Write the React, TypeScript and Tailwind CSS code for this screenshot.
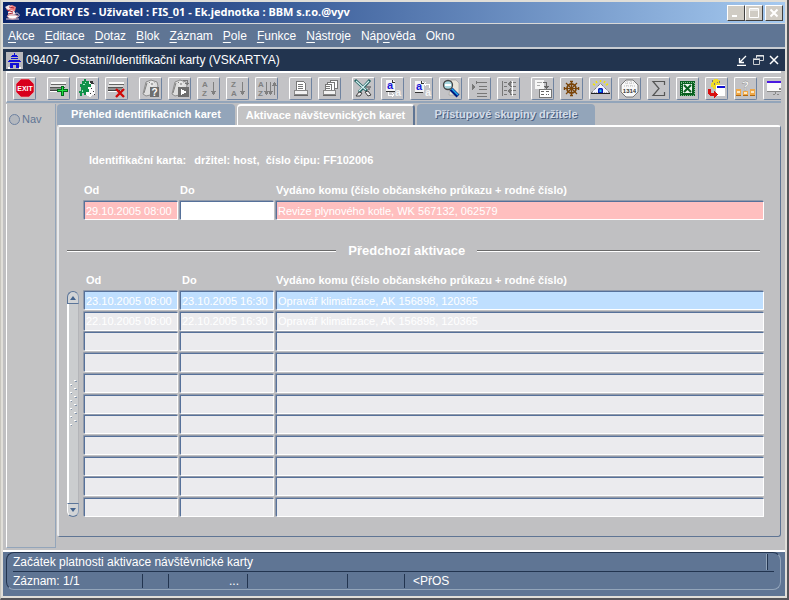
import { useState } from "react";
import type { ReactNode } from "react";

const menus = [
  { before: "", key: "A", after: "kce" },
  { before: "", key: "E", after: "ditace" },
  { before: "", key: "D", after: "otaz" },
  { before: "", key: "B", after: "lok" },
  { before: "", key: "Z", after: "áznam" },
  { before: "", key: "P", after: "ole" },
  { before: "", key: "F", after: "unkce" },
  { before: "", key: "N", after: "ástroje" },
  { before: "Náp", key: "o", after: "věda" },
  { before: "Okno", key: "", after: "" },
];

const tabs = [
  "Přehled identifikačních karet",
  "Aktivace návštevnických karet",
  "Přístupové skupiny držitele",
];

const history = [
  { od: "23.10.2005 08:00", doo: "23.10.2005 16:30", komu: "Opravář klimatizace, AK 156898, 120365" },
  { od: "22.10.2005 08:00", doo: "22.10.2005 16:30", komu: "Opravář klimatizace, AK 156898, 120365" },
  ...Array.from({ length: 9 }, () => ({ od: "", doo: "", komu: "" })),
];

const fieldBase =
  "block h-[19px] w-full rounded-[1px] border border-t-[#56719a] border-l-[#56719a] border-r-white border-b-white px-px text-[11px] leading-none text-white shadow-[-1px_-1px_0_#929bab] outline-none";

function Icon({ children }: { children: ReactNode }) {
  return (
    <svg width="21" height="21" viewBox="0 0 21 21" shapeRendering="crispEdges" aria-hidden="true">
      {children}
    </svg>
  );
}

function Sheet() {
  return (
    <>
      <path d="M3 4h15v2H3z" fill="#f8f8f8" />
      <path d="M3 6h15v1H3z" fill="#666" />
      <path d="M2 7h15v2H2z" fill="#dcdcdc" />
      <path d="M2 9h15v1H2z" fill="#555" />
      <path d="M2 10h14v2H2z" fill="#8e8e8e" />
      <path d="M2 12h12v1H2z" fill="#444" />
      <path d="M2 13h10v1H2z" fill="#fff" />
    </>
  );
}

function GrayCards() {
  return (
    <g shapeRendering="auto">
      <path d="M6 4l5-2 6 2 1 4-4 8-8 2-3-2z" fill="#dedede" stroke="#8c8c8c" />
      <path d="M7 5L4 15M9 4l3 3M14 4l-1 4" stroke="#808080" fill="none" />
      <circle cx="12" cy="6" r="2" fill="#aaa" stroke="#fff" />
    </g>
  );
}

function Letters({ top, bottom }: { top: string; bottom: string }) {
  return (
    <g fontFamily="Liberation Sans, sans-serif" fontSize="8" fontWeight="bold" fill="#808080">
      <text x="4" y="9">{top}</text>
      <text x="4" y="18">{bottom}</text>
    </g>
  );
}

const toolGroups: { name: string; icon: ReactNode }[][] = [
  [
    {
      name: "Konec",
      icon: (
        <g shapeRendering="auto">
          <path d="M7 1h8l5 5v8l-5 5H7l-5-5V6z" fill="#d8001c" stroke="#f0b0b0" strokeWidth="0.6" />
          <text x="11" y="12.500" textAnchor="middle" fontSize="7" fontWeight="bold" fontFamily="Liberation Sans, sans-serif" fill="#fff">
            EXIT
          </text>
        </g>
      ),
    },
  ],
  [
    {
      name: "Nový záznam",
      icon: (
        <>
          <Sheet />
          <path d="M13 8h3v3h4v3h-4v4h-3v-4H9v-3h4z" fill="#006b1c" />
          <path d="M14 9h1v3h4v1h-4v4h-1v-4h-4v-1h4z" fill="#20e040" />
        </>
      ),
    },
    {
      name: "Duplikovat",
      icon: (
        <>
          <path d="M8 3l6 1 4 4v8l-5 3-6-3z" fill="#fafafa" />
          <path d="M5 3h2V1h2v2h3v3h2v3h-3v2h1v3H9v3H7v-2H5v3H3v-3H2v-2h2V9H3V6h2z" fill="#109048" />
          <path d="M13 3h3v2h1v1h-3zM14 10h1v1h-1zM16 13h1v1h-1zM13 15h1v1h-1zM17 16h1v1h-1z" fill="#333" />
          <path d="M6 6h2v1H6zM5 12h1v2H5zM8 4h1v1H8z" fill="#9ff0c0" />
        </>
      ),
    },
    {
      name: "Smazat záznam",
      icon: (
        <>
          <Sheet />
          <path d="M10 11l8 8M18 11l-8 8" stroke="#d00808" strokeWidth="2.4" shapeRendering="auto" />
        </>
      ),
    },
  ],
  [
    {
      name: "Zadat dotaz",
      icon: (
        <>
          <GrayCards />
          <path d="M10 9h9v10h-9z" fill="#6e6e6e" />
          <text x="14.500" y="17.500" textAnchor="middle" fontSize="10" fontWeight="bold" fontFamily="Liberation Sans, sans-serif" fill="#fff">?</text>
        </>
      ),
    },
    {
      name: "Provést dotaz",
      icon: (
        <>
          <GrayCards />
          <path d="M9 9h11v10H9z" fill="#6e6e6e" />
          <path d="M12 11v6l6-3z" fill="#fff" />
          <path d="M14 2h4v5M16 5h4" stroke="#777" fill="none" />
        </>
      ),
    },
    {
      name: "Třídit vzestupně",
      icon: (
        <>
          <Letters top="A" bottom="Z" />
          <path d="M15 4h1v9h2l-2 4h-1l-2-4h2z" fill="#808080" />
        </>
      ),
    },
    {
      name: "Třídit sestupně",
      icon: (
        <>
          <Letters top="Z" bottom="A" />
          <path d="M15 4h1v9h2l-2 4h-1l-2-4h2z" fill="#808080" />
        </>
      ),
    },
    {
      name: "Třídit podle",
      icon: (
        <>
          <g transform="translate(-2 0)">
            <Letters top="A" bottom="Z" />
          </g>
          <path d="M10 4h1v9h2l-2 4h-1l-2-4h2zM14 4h1v9h2l-2 4h-1l-2-4h2zM18 17h1V8h2l-2-4h-1l-2 4h2z" fill="#808080" />
        </>
      ),
    },
  ],
  [
    {
      name: "Tisk",
      icon: (
        <>
          <path d="M7 3h6l2 2v7H6V6z" fill="#fff" stroke="#777" />
          <path d="M8 6h5v1H8zM8 8h5v1H8zM8 10h5v1H8z" fill="#777" />
          <path d="M4 12h13v4H4z" fill="#f2f2f2" stroke="#888" />
          <path d="M4 17h14v1H4z" fill="#666" />
        </>
      ),
    },
    {
      name: "Tisk seznamu",
      icon: (
        <>
          <path d="M12 2h6v8h-5V4h-2z" fill="#fff" stroke="#777" />
          <path d="M9 4h6v8h-5V6H8z" fill="#fff" stroke="#777" />
          <path d="M6 6h6v7H6z" fill="#fff" stroke="#777" />
          <path d="M7 8h4v1H7zM7 10h4v1H7z" fill="#777" />
          <path d="M4 12h12v4H4z" fill="#f2f2f2" stroke="#888" />
          <path d="M4 17h13v1H4z" fill="#666" />
        </>
      ),
    },
  ],
  [
    {
      name: "Vyjmout",
      icon: (
        <g shapeRendering="auto" fill="none">
          <path d="M2 2l12 11M17 2L6 14" stroke="#1f5f5f" strokeWidth="3" />
          <path d="M3 3l10 9M16 3L6 13" stroke="#d4f0f0" strokeWidth="1.300" />
          <path d="M3 18l3-4 3 1-2 3zM12 14l3-1 3 4-3 1z" stroke="#444" fill="#eee" />
          <path d="M13 9h5M15 11h2" stroke="#444" />
        </g>
      ),
    },
    {
      name: "Kopírovat",
      icon: (
        <>
          <path d="M4 2h7l2 2v9H4z" fill="#f4f4f4" />
          <path d="M10 2h1v2h2v1h-3zM4 13h9v1H4z" fill="#333" />
          <g fontFamily="Liberation Sans, sans-serif" fontSize="11" fontWeight="bold">
            <text x="5" y="11" fill="#1818d8">a</text>
            <text x="13" y="18" fill="#f4f4f4">a</text>
          </g>
          <path d="M6 14v3h5M10 15l2 2-2 2" stroke="#fff" fill="none" />
        </>
      ),
    },
    {
      name: "Vložit",
      icon: (
        <>
          <path d="M4 3h7l2 2v9H4z" fill="#f4f4f4" />
          <path d="M10 3h1v2h2v1h-3zM4 14h8v1H4z" fill="#333" />
          <g fontFamily="Liberation Sans, sans-serif" fontSize="11" fontWeight="bold">
            <text x="5" y="12" fill="#1818d8">a</text>
            <text x="14" y="18" fill="#f4f4f4">a</text>
          </g>
          <path d="M13 6h5v4M15 4l-2 2 2 2" stroke="#fff" fill="none" />
        </>
      ),
    },
    {
      name: "Hledat",
      icon: (
        <g shapeRendering="auto">
          <path d="M11 2h5l3 3v12H9z" fill="#e8e4d8" stroke="#999" strokeWidth="0.6" />
          <path d="M11 11l7 7" stroke="#001a80" strokeWidth="4" />
          <path d="M11 10l7 7" stroke="#20a8e8" strokeWidth="1.600" />
          <circle cx="8" cy="7" r="4.500" fill="#a8d8e0" stroke="#444" strokeWidth="1.300" />
          <path d="M5 7h6" stroke="#fff" strokeWidth="2" />
        </g>
      ),
    },
    {
      name: "Vložit řádek",
      icon: (
        <path d="M8 4h10v1H8zM10 8h8v1h-8zM10 11h8v1h-8zM8 15h10v1H8zM8 18h10v1H8zM3 6l4 3-4 3zM7 3h1v3H7z" fill="#777" />
      ),
    },
    {
      name: "Seznam hodnot",
      icon: (
        <>
          <path d="M4 3h1v15H4zM6 4h3v1H6zM6 8h3v1H6zM6 12h3v1H6zM6 16h3v1H6zM12 4h6v1h-6zM12 8h6v1h-6zM12 12h6v1h-6zM12 16h6v1h-6z" fill="#777" />
          <path d="M13 3l-4 3 4 3zM13 10l-4 3 4 3z" fill="#777" />
          <path d="M14 3h1v15h-1z" fill="#fff" />
        </>
      ),
    },
  ],
  [
    {
      name: "Přenos",
      icon: (
        <>
          <path d="M3 2h9v9H3z" fill="#f6f6f6" />
          <path d="M5 4h5v1H5zM5 7h3v1H5z" fill="#ababab" />
          <path d="M11 4h4v4h2l-2 3h-1l-2-3h2V5h-3z" fill="#666" />
          <path d="M7 11h12v8H7z" fill="#fff" stroke="#777" />
          <path d="M9 13h3v1H9zM9 16h3v1H9zM14 13h3v1h-3zM14 16h1v1h-1zM16 16h1v1h-1z" fill="#666" />
        </>
      ),
    },
    {
      name: "Navigace",
      icon: (
        <g shapeRendering="auto" fill="none" stroke="#7a4408">
          <circle cx="10.500" cy="10.500" r="4.500" strokeWidth="1.800" />
          <path d="M10.500 3v15M3 10.500h15M5 5l11 11M16 5L5 16" strokeWidth="1.200" />
          <path d="M9 3.500h3M9 17.500h3M3.500 9v3M17.500 9v3" strokeWidth="1.500" />
        </g>
      ),
    },
    {
      name: "Detail",
      icon: (
        <g shapeRendering="auto">
          <path d="M10.500 2v2M6 3l1 2M15 3l-1 2M3 6l2 1M18 6l-2 1" stroke="#f4e400" strokeWidth="1.400" />
          <path d="M1 15l9.500-9.500L20 15z" fill="#f4f4ff" stroke="#555" strokeDasharray="1 1" />
          <path d="M8 15v-4l1-1h3l1 1v4z" fill="#0818b8" />
          <path d="M9.500 11.500h2V14h-2z" fill="#18c8f0" />
          <path d="M1 15.500h19" stroke="#222" />
        </g>
      ),
    },
    {
      name: "Kalendář",
      icon: (
        <g shapeRendering="auto">
          <path d="M7 2h7l5 5v7l-5 5H7l-5-5V7z" fill="#f8f8f8" stroke="#777" />
          <path d="M6 5h9M5 8h11M8 3v6M12 3v6" stroke="#bbb" strokeDasharray="1 1" />
          <text x="10.500" y="15" textAnchor="middle" fontSize="6" fontWeight="bold" fontFamily="Liberation Sans, sans-serif" fill="#333">1314</text>
        </g>
      ),
    },
    {
      name: "Součet",
      icon: <path d="M16.500 7V3.500H5l6 7-6 7h11.500V14" fill="none" stroke="#555" strokeWidth="1.200" shapeRendering="auto" />,
    },
    {
      name: "Excel",
      icon: (
        <>
          <path d="M3 3h15v15H3z" fill="#0a6020" />
          <path d="M4 4h13v13H4z" fill="none" stroke="#7fc08c" strokeDasharray="1 1" />
          <path d="M6 6h9v9H6z" fill="#eef6ee" />
          <path d="M7 7l7 7M14 7l-7 7" stroke="#0a6020" strokeWidth="2" shapeRendering="auto" />
        </>
      ),
    },
    {
      name: "Export",
      icon: (
        <>
          <path d="M6 2h2V1h4v1h2v5h-2v2h-2v2H7V9H5V5h1z" fill="#f0dc28" />
          <path d="M6 2h1v2H6zM13 3h1v2h-1zM8 5h1v2H8zM11 4h1v1h-1z" fill="#777" />
          <path d="M10 7h9v11h-9z" fill="#fff" />
          <path d="M11 8h8v2h-8z" fill="#1010d0" />
          <path d="M2 11h3v4h3v-2l4 4-4 3v-2H4l-2-2z" fill="#d81010" />
        </>
      ),
    },
    {
      name: "Nápověda",
      icon: (
        <>
          <path d="M1 11h5v7H1zM8 13h5v5H8zM15 11h5v7h-5z" fill="#f0a848" />
          <path d="M2 13h3v2H2zM9 14h3v2H9zM16 13h3v2h-3z" fill="#fce8c0" />
          <path d="M1 17h5v1H1zM8 17h5v1H8zM15 17h5v1h-5z" fill="#b06810" />
          <text x="10.500" y="12" textAnchor="middle" fontSize="12" fontWeight="bold" fontFamily="Liberation Sans, sans-serif" fill="#fff" stroke="#777" strokeWidth="0.300">?</text>
        </>
      ),
    },
    {
      name: "Prezentace",
      icon: (
        <>
          <path d="M3 4h18v9H3z" fill="#fafafa" />
          <path d="M3 3h18v2H3z" fill="#4818e0" />
          <path d="M3 13h18v1H3zM11 13h1v3h-1zM9 16h2v1H9zM13 16h2v1h-2zM15 10h2v2h-2z" fill="#888" />
        </>
      ),
    },
  ],
];

function ToolButton({ name, icon }: { name: string; icon: ReactNode }) {
  return (
    <button
      type="button"
      aria-label={name}
      className="size-[23px] shrink-0 rounded-[2px] border border-t-white border-l-white border-r-[#6f83a0] border-b-[#6f83a0] bg-[#c3c3c6]"
    >
      <Icon>{icon}</Icon>
    </button>
  );
}

function WindowButton({ label, children }: { label: string; children: ReactNode }) {
  return (
    <button
      type="button"
      aria-label={label}
      className="flex h-4 w-[18px] items-center justify-center border border-t-white border-l-white border-r-[#404040] border-b-[#404040] bg-[#d0ccc4]"
    >
      <svg width="12" height="12" viewBox="0 0 12 12" fill="none" stroke="#fff">
        {children}
      </svg>
    </button>
  );
}

function ScrollBar() {
  return (
    <div className="flex w-3 flex-col">
      <button type="button" aria-label="Nahoru" className="flex h-[13px] items-center justify-center rounded-t-full border border-t-[#5b7599] border-l-[#5b7599] border-r-[#8ea0b8] border-b-[#5b7599] bg-[#d2d4d6]">
        <svg width="6" height="4" viewBox="0 0 6 4" aria-hidden="true"><path d="M3 0l3 4H0z" fill="#44648e" /></svg>
      </button>
      <div className="flex flex-1 items-center justify-center border-r border-l-2 border-r-[#b4b5b9] border-l-white bg-[#cbcdcf]">
        <svg width="8" height="50" viewBox="0 0 8 50" shapeRendering="crispEdges" aria-hidden="true">
          {[0, 8, 16, 24, 32, 40].map((y) => (
            <g key={y}>
              <path d={`M4 ${y + 1}h2v1H4zM0 ${y + 5}h2v1H0z`} fill="#fff" />
              <path d={`M5 ${y + 2}h2v1H5zM1 ${y + 6}h1v1H1z`} fill="#8294ac" />
            </g>
          ))}
        </svg>
      </div>
      <button type="button" aria-label="Dolů" className="flex h-[14px] items-center justify-center rounded-b-full border border-t-[#5b7599] border-l-white border-r-[#8ea0b8] border-b-[#5b7599] bg-[#d2d4d6]">
        <svg width="6" height="4" viewBox="0 0 6 4" aria-hidden="true"><path d="M0 0h6L3 4z" fill="#44648e" /></svg>
      </button>
    </div>
  );
}

function Columns() {
  return (
    <colgroup>
      <col className="w-24" />
      <col className="w-24" />
      <col />
    </colgroup>
  );
}

export default function App() {
  const [activeTab, setActiveTab] = useState(1);

  return (
    <div className="flex min-h-screen w-full flex-col border-r-2 border-b-2 border-l border-r-[#55555a] border-b-[#55555a] border-l-[#c8c6be] font-['Liberation_Sans',Arial,sans-serif] text-white">
      <div className="flex flex-1 flex-col border-2 border-[#e0ded8] bg-[#c0c0c2]">
        <header className="flex h-[21px] items-center gap-1 bg-linear-to-r from-[#0a246a] to-[#a6caf0] pr-[2px] pl-px">
          <svg width="17" height="17" viewBox="0 0 17 17" aria-hidden="true">
            <path d="M2 5l2-3 4-1 4 2-1 4-4 2z" fill="#f08080" />
            <path d="M1 3l4-2 3 2-4 3zM4 8l3-2 3 1 2 3-4 2-4-1z" fill="#f6e8ea" />
            <path d="M5 3l5 1M3 6l6 2M4 10l5-1" stroke="#b02838" />
            <path d="M3 12c2 4 9 4 11 0l-2-1H5z" fill="#fff" stroke="#c88890" />
            <path d="M12 9c4 0 4 4 1 4M2 15h13" stroke="#f4d4d8" fill="none" />
          </svg>
          <h1 className="flex-1 font-['Noto_Sans',Tahoma,sans-serif] text-[11px] font-bold whitespace-nowrap">
            FACTORY ES - Uživatel : FIS_01 - Ek.jednotka : BBM s.r.o.@vyv
          </h1>
          <div className="flex gap-0.5">
            <div className="flex">
              <WindowButton label="Minimalizovat">
                <path d="M2 9h5" strokeWidth="2" />
              </WindowButton>
              <WindowButton label="Maximalizovat">
                <path d="M1.500 1.500h9v9h-9zM1 3h10" />
              </WindowButton>
            </div>
            <WindowButton label="Zavřít">
              <path d="M2.500 2.500l7 7M9.500 2.500l-7 7" strokeWidth="2" />
            </WindowButton>
          </div>
        </header>

        <nav className="flex h-[26px] items-center gap-2.5 border-t border-b-2 border-t-[#d8d8d8] border-b-[#c8ccd2] bg-[#5f7594] pl-[5px]">
          {menus.map((m) => (
            <button key={m.before + m.key + m.after} type="button" className="text-xs">
              {m.before}
              <span className="underline underline-offset-2">{m.key}</span>
              {m.after}
            </button>
          ))}
        </nav>

        <div className="flex h-[22px] items-center gap-[3px] bg-[#22344f] pr-[5px] pl-[3px]">
          <svg width="17" height="19" viewBox="0 0 17 19" shapeRendering="crispEdges" aria-hidden="true">
            <path d="M0 1h17v17H0z" fill="#b8b8bc" />
            <path d="M8 2h1v2h2v1h1v1H5V5h1V4h2zM5 7h7v1H5zM3 9h11v1h1v1H2v-1h1zM4 12h9v5h-3v-3H7v3H4z" fill="#1010d8" />
            <path d="M2 16h2v2H2zM13 16h2v2h-2z" fill="#fff" />
          </svg>
          <h2 className="flex-1 text-xs whitespace-nowrap">09407 - Ostatní/Identifikační karty (VSKARTYA)</h2>
          <div className="flex gap-1">
            <button type="button" aria-label="Sbalit okno">
              <svg width="12" height="12" viewBox="0 0 12 12" fill="none" stroke="#fff">
                <path d="M10 2L4 8M3.500 4v4.500H8M1 11.500h9" strokeWidth="1.300" />
              </svg>
            </button>
            <button type="button" aria-label="Obnovit okno">
              <svg width="12" height="12" viewBox="0 0 12 12" fill="none" stroke="#c8ccd0">
                <path d="M4.500 4V1.500h7v5H8M1.500 5.500h6v5h-6z" />
                <path d="M4 2h8M1 5h7" stroke="#fff" />
              </svg>
            </button>
            <button type="button" aria-label="Zavřít okno">
              <svg width="12" height="12" viewBox="0 0 12 12" fill="none" stroke="#fff">
                <path d="M2 2l8 8M10 2l-8 8" strokeWidth="1.500" />
              </svg>
            </button>
          </div>
        </div>

        <div className="mr-1 ml-[3px] flex gap-[11px] overflow-hidden border-t-2 border-b-2 border-l border-t-white border-b-[#93a5ba] border-l-white bg-[#c3c3c6] pt-1 pb-px pl-1.5">
          {toolGroups.map((group, i) => (
            <div key={i} className="flex shrink-0 gap-1.5">
              {group.map((tool) => (
                <ToolButton key={tool.name} name={tool.name} icon={tool.icon} />
              ))}
            </div>
          ))}
        </div>

        <div className="mt-px flex flex-1 pr-1 pl-[3px]">
          <aside className="w-[50px] border-r border-b border-l border-r-[#93a5ba] border-b-[#93a5ba] border-l-white bg-[#c3c3c4] pt-[7px] pl-0.5">
            <label className="flex items-center gap-0.5 text-[11px] text-[#5f7594]">
              <input type="radio" className="size-[11px] appearance-none rounded-full border border-[#6d81a0] bg-[#b4b8be]" />
              Nav
            </label>
          </aside>

          <main className="flex min-w-0 flex-1 flex-col pb-[11px] pl-px">
            <div role="tablist" className="flex gap-0.5">
              {tabs.map((tab, i) => (
                <button
                  key={tab}
                  type="button"
                  role="tab"
                  aria-selected={activeTab === i}
                  onClick={() => setActiveTab(i)}
                  className={
                    "h-[21px] w-[178px] text-[11px] font-bold whitespace-nowrap " +
                    (activeTab === i
                      ? "rounded-t-[4px] border-t-2 border-r-2 border-l border-t-white border-r-[#5f7594] border-l-white bg-[#c3c3c4]"
                      : i === 2
                        ? "rounded-t-[4px] bg-[#93a5ba] text-[#d5dde8] [text-shadow:1px_1px_0_#4a6080]"
                        : "rounded-t-[4px] bg-[#93a5ba]")
                  }
                >
                  {tab}
                </button>
              ))}
            </div>

            <section
              role="tabpanel"
              className="flex-1 rounded-[3px] border-t-2 border-r border-b border-l-2 border-t-white border-r-[#5f7594] border-b-[#5f7594] border-l-[#e8eaec] pr-4 pl-2"
            >
              <p className="mt-[25px] ml-[22px] flex gap-2 text-[11px] leading-4 font-bold">
                <span>Identifikační karta:</span>
                <span className="whitespace-pre">držitel: host,  číslo čipu: FF102006</span>
              </p>

              <div className="mt-3.5 pl-[17px]">
                <table className="w-full table-fixed border-collapse">
                  <Columns />
                  <thead>
                    <tr className="h-[19px] text-left text-[11px] leading-4">
                      <th className="p-0 align-top">Od</th>
                      <th className="p-0 align-top">Do</th>
                      <th className="p-0 align-top">Vydáno komu (číslo občanského průkazu + rodné číslo)</th>
                    </tr>
                  </thead>
                  <tbody>
                    <tr>
                      <td className="p-0 pr-0.5">
                        <input aria-label="Od" defaultValue="29.10.2005 08:00" className={fieldBase + " bg-[#ffbfbf]"} />
                      </td>
                      <td className="p-0 pr-0.5">
                        <input aria-label="Do" className={fieldBase + " bg-white"} />
                      </td>
                      <td className="p-0">
                        <input aria-label="Vydáno komu" defaultValue="Revize plynového kotle, WK 567132, 062579" className={fieldBase + " bg-[#ffbfbf]"} />
                      </td>
                    </tr>
                  </tbody>
                </table>
              </div>

              <div className="mt-[21px] flex items-center gap-3">
                <div className="h-0.5 flex-[20] border-t border-b border-t-[#6a6a6a] border-b-white" />
                <h3 className="text-[13px] leading-5 font-bold">Předchozí aktivace</h3>
                <div className="mr-1 h-0.5 flex-[21] border-t border-b border-t-[#6a6a6a] border-b-white" />
              </div>

              <div className="mt-[11px] flex gap-[5px]">
                <div className="flex pt-[19px] pb-0.5">
                  <ScrollBar />
                </div>
                <table className="h-[247px] flex-1 table-fixed border-collapse">
                  <Columns />
                  <thead>
                    <tr className="h-[19px] text-left text-[11px] leading-4">
                      <th className="p-0 pl-0.5 align-top">Od</th>
                      <th className="p-0 pl-0.5 align-top">Do</th>
                      <th className="p-0 align-top">Vydáno komu (číslo občanského průkazu + rodné číslo)</th>
                    </tr>
                  </thead>
                  <tbody>
                    {history.map((row, i) => (
                      <tr key={i}>
                        <td className="p-0 pr-0.5 align-top">
                          <input aria-label={`Od ${i + 1}`} defaultValue={row.od} className={fieldBase + (i === 0 ? " bg-[#bfdfff]" : " bg-[#ebebee]")} />
                        </td>
                        <td className="p-0 pr-0.5 align-top">
                          <input aria-label={`Do ${i + 1}`} defaultValue={row.doo} className={fieldBase + (i === 0 ? " bg-[#bfdfff]" : " bg-[#ebebee]")} />
                        </td>
                        <td className="p-0 align-top">
                          <input aria-label={`Vydáno komu ${i + 1}`} defaultValue={row.komu} className={fieldBase + (i === 0 ? " bg-[#bfdfff]" : " bg-[#ebebee]")} />
                        </td>
                      </tr>
                    ))}
                  </tbody>
                </table>
              </div>
            </section>
          </main>
        </div>

        <footer className="mt-0.5 border-t-2 border-t-white bg-[#5f7594] pr-1 pb-1.5 pl-[3px] text-xs">
          <div className="rounded-lg border border-t-[#22344f] border-r-[#93a5ba] border-b-[#93a5ba] border-l-[#22344f] px-1.5">
            <div className="flex h-[19px] items-center justify-between border-b border-b-[#22344f]">
              <span>Začátek platnosti aktivace návštěvnické karty</span>
              <span className="mr-1.5 h-4 w-0.5 border-r border-l border-r-[#22344f] border-l-[#93a5ba]" />
            </div>
            <div className="flex h-[17px] items-center">
              <span className="h-3.5 w-[130px] border-r border-r-[#22344f] leading-3.5">Záznam: 1/1</span>
              <span className="h-3.5 w-[26px] border-r border-r-[#22344f]" />
              <span className="h-3.5 w-[79px] border-r border-r-[#22344f] pr-2 text-right leading-3.5">...</span>
              <span className="h-3.5 w-[100px] border-r border-r-[#22344f]" />
              <span className="h-3.5 w-[57px] border-r border-r-[#22344f]" />
              <span className="pl-2 leading-3.5">&lt;PřOS</span>
            </div>
          </div>
        </footer>
      </div>
    </div>
  );
}
